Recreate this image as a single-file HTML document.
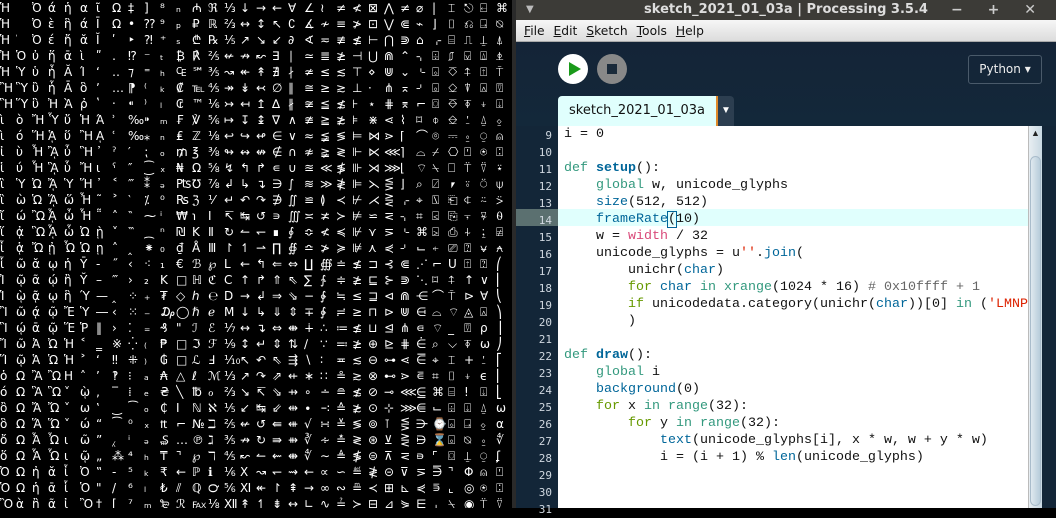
<!DOCTYPE html>
<html><head><meta charset="utf-8"><style>
*{margin:0;padding:0;box-sizing:border-box}
body{width:1056px;height:508px;overflow:hidden;background:#000;position:relative;font-family:"Liberation Sans",sans-serif}
#cv{position:absolute;left:0;top:0;width:512px;height:508px;background:#000;overflow:hidden;color:#fff;font:12px/16px "DejaVu Sans","Noto Sans CJK SC",sans-serif}
#cv div{height:16px;white-space:nowrap}
#cv span{display:inline-block;width:16px;text-align:left;overflow:hidden;height:16px}
#gap{position:absolute;left:512px;top:0;width:4px;height:508px;background:#2a2a2a}
#win{position:absolute;left:516px;top:0;width:540px;height:508px;background:#132638}
#title{height:20px;background:#3c3b37;color:#ddd;font:bold 13px/20px "DejaVu Sans",sans-serif;text-align:center;position:relative}
#menu{position:absolute;top:20px;left:0;width:540px;height:22px;background:linear-gradient(#f6f6f6,#dcdcdc);font:12.3px/22px "DejaVu Sans",sans-serif;color:#111;padding-left:8px;border-bottom:1px solid #aaa}
#menu span{margin-right:5px}
#tool{position:absolute;top:42px;left:0;width:540px;height:84px;background:linear-gradient(#142437,#13283a)}
.btn{position:absolute;top:12px;width:30px;height:30px;border-radius:50%}
#tab{position:absolute;left:42px;top:54px;width:160px;height:30px;background:#e0fffd;border-radius:4px 0 0 0;border-right:2px solid #e08a2a;font:13px/30px "DejaVu Sans",sans-serif;text-align:center;color:#111}
#tabdd{position:absolute;left:202px;top:54px;width:16px;height:30px;background:#2c3e50;border-radius:0 4px 0 0;color:#fff;font-size:10px;line-height:30px;text-align:center}
#py{position:absolute;left:452px;top:13px;width:74px;height:29px;border:1px solid #4a5a6a;border-radius:3px;color:#eee;font:12px/27px "DejaVu Sans",sans-serif;text-align:center}
#gut{position:absolute;left:0;top:126px;width:42px;height:382px;background:#132638}
#code{position:absolute;left:42px;top:126px;width:470px;height:382px;background:#fff}
#sb{position:absolute;left:512px;top:126px;width:14px;height:382px;background:linear-gradient(90deg,#e8eef2,#c8d8e2);border-left:1px solid #bbb}
#rs{position:absolute;left:526px;top:126px;width:14px;height:382px;background:#132638}
.ln{position:absolute;left:0;width:36px;text-align:right;font:11px/17px "DejaVu Sans Mono",monospace;color:#d0d8e0}
.cl{position:absolute;left:6px;font:13.33px/17px "Liberation Mono",monospace;color:#111;white-space:pre}
.k{color:#33997e}.b{color:#006699}.f{color:#006699;font-weight:bold}.p{color:#d94a7a}.g{color:#669900}.s{color:#dd2200}.c{color:#666}
</style></head><body>
<div id="cv">
<div><span>Ἡ</span><span>̓</span><span>Ὀ</span><span>ά</span><span>ἡ</span><span>α</span><span>ῖ</span><span>Ω</span><span>‡</span><span>]</span><span>⁸</span><span>ₙ</span><span>₼</span><span>ℜ</span><span>⅓</span><span>↓</span><span>→</span><span>←</span><span>∀</span><span>∠</span><span>≀</span><span>≠</span><span>≮</span><span>⊠</span><span>⋀</span><span>≠</span><span>⌀</span><span>|</span><span>⌶</span><span>⎋</span><span>⍇</span><span>⌘</span></div>
<div><span>Ἡ</span><span>̔</span><span>Ὀ</span><span>ὲ</span><span>ἣ</span><span>ά</span><span>Ῑ</span><span>Ω</span><span>•</span><span>⁇</span><span>⁹</span><span>ₚ</span><span>₽</span><span>ℝ</span><span>⅔</span><span>↔</span><span>↕</span><span>↖</span><span>∁</span><span>∡</span><span>≁</span><span>≡</span><span>≯</span><span>⊡</span><span>⋁</span><span>⋐</span><span>⌁</span><span>⌋</span><span>⌷</span><span>⎌</span><span>⍈</span><span>⍉</span></div>
<div><span>Ἡ</span><span>̕</span><span>Ὀ</span><span>έ</span><span>ἤ</span><span>ᾰ</span><span>Ῐ</span><span>ʹ</span><span>‣</span><span>⁈</span><span>⁺</span><span>ₛ</span><span>₾</span><span>℞</span><span>⅕</span><span>↗</span><span>↘</span><span>↙</span><span>∂</span><span>∢</span><span>≂</span><span>≢</span><span>≰</span><span>⊢</span><span>⋂</span><span>⋑</span><span>⌂</span><span>⌌</span><span>⌸</span><span>⎍</span><span>⍊</span><span>⍋</span></div>
<div><span>Ἠ</span><span>Ὁ</span><span>ὐ</span><span>ἥ</span><span>ᾱ</span><span>ὶ</span><span>ʺ</span><span>․</span><span>⁉</span><span>⁻</span><span>ₜ</span><span>₿</span><span>℟</span><span>⅖</span><span>↚</span><span>↛</span><span>↜</span><span>∃</span><span>∣</span><span>≃</span><span>≣</span><span>≱</span><span>⊣</span><span>⋃</span><span>⋒</span><span>⌃</span><span>⌍</span><span>⌹</span><span>⎎</span><span>⍌</span><span>⍍</span><span>⍎</span></div>
<div><span>Ἡ</span><span>Ὑ</span><span>ὑ</span><span>ἦ</span><span>Ᾰ</span><span>Ί</span><span>ʻ</span><span>‥</span><span>⁊</span><span>⁼</span><span>ₕ</span><span>₠</span><span>℠</span><span>⅗</span><span>↝</span><span>↞</span><span>↟</span><span>∄</span><span>∤</span><span>≄</span><span>≤</span><span>≲</span><span>⊤</span><span>⋄</span><span>⋓</span><span>⌄</span><span>⌎</span><span>⌺</span><span>⎏</span><span>⍏</span><span>⍐</span><span>⍑</span></div>
<div><span>Ἢ</span><span>Ὓ</span><span>ὒ</span><span>ἧ</span><span>Ᾱ</span><span>ὃ</span><span>ʼ</span><span>…</span><span>⁋</span><span>⁽</span><span>ₖ</span><span>₡</span><span>℡</span><span>⅘</span><span>↠</span><span>↡</span><span>↢</span><span>∅</span><span>∥</span><span>≅</span><span>≥</span><span>≳</span><span>⊥</span><span>⋅</span><span>⋔</span><span>⌅</span><span>⌏</span><span>⌻</span><span>⎐</span><span>⍒</span><span>⍓</span><span>⍔</span></div>
<div><span>Ἣ</span><span>Ὕ</span><span>ὓ</span><span>Ἠ</span><span>Ὰ</span><span>ῤ</span><span>ʽ</span><span>‧</span><span>⁌</span><span>⁾</span><span>ₗ</span><span>₢</span><span>™</span><span>⅙</span><span>↣</span><span>↤</span><span>↥</span><span>∆</span><span>∦</span><span>≆</span><span>≦</span><span>≴</span><span>⊦</span><span>⋆</span><span>⋕</span><span>⌆</span><span>⌐</span><span>⌼</span><span>⎑</span><span>⍕</span><span>⍖</span><span>⍗</span></div>
<div><span>ὶ</span><span>ὸ</span><span>Ἤ</span><span>Ὗ</span><span>ὔ</span><span>Ἡ</span><span>Ά</span><span>ʾ</span><span>‰</span><span>⁍</span><span>ₘ</span><span>₣</span><span>℣</span><span>⅚</span><span>↦</span><span>↧</span><span>↨</span><span>∇</span><span>∧</span><span>≇</span><span>≧</span><span>≵</span><span>⊧</span><span>⋇</span><span>⋖</span><span>⌇</span><span>⌑</span><span>⌽</span><span>⎒</span><span>⍘</span><span>⍙</span><span>⍚</span></div>
<div><span>ὶ</span><span>ό</span><span>Ἥ</span><span>ᾉ</span><span>ὕ</span><span>Ἢ</span><span>ᾼ</span><span>ʿ</span><span>‱</span><span>⁎</span><span>ₙ</span><span>₤</span><span>ℤ</span><span>⅛</span><span>↩</span><span>↪</span><span>↫</span><span>∈</span><span>∨</span><span>≈</span><span>≨</span><span>≶</span><span>⊨</span><span>⋈</span><span>⋗</span><span>⌈</span><span>⌒</span><span>⌾</span><span>⎓</span><span>⍛</span><span>⍜</span><span>⍝</span></div>
<div><span>ἰ</span><span>ὺ</span><span>Ἦ</span><span>ᾊ</span><span>ὖ</span><span>Ἣ</span><span>᾽</span><span>ˀ</span><span>′</span><span>⁏</span><span>ₒ</span><span>₥</span><span>℥</span><span>⅜</span><span>↬</span><span>↭</span><span>↮</span><span>∉</span><span>∩</span><span>≉</span><span>≩</span><span>≷</span><span>⊩</span><span>⋉</span><span>⋘</span><span>⌉</span><span>⌓</span><span>⌿</span><span>⎔</span><span>⍞</span><span>⍟</span><span>⍠</span></div>
<div><span>ἱ</span><span>ύ</span><span>Ἧ</span><span>ᾋ</span><span>ὗ</span><span>Ἤ</span><span>ι</span><span>ˁ</span><span>″</span><span>⁐</span><span>ₓ</span><span>₦</span><span>Ω</span><span>⅝</span><span>↯</span><span>↰</span><span>↱</span><span>∊</span><span>∪</span><span>≊</span><span>≪</span><span>≸</span><span>⊪</span><span>⋊</span><span>⋙</span><span>⌊</span><span>⌔</span><span>⍀</span><span>⎕</span><span>⍡</span><span>⍢</span><span>⍣</span></div>
<div><span>ἲ</span><span>Ὑ</span><span>Ὠ</span><span>ᾌ</span><span>Ὑ</span><span>Ἥ</span><span>᾿</span><span>˂</span><span>‴</span><span>⁑</span><span>ₔ</span><span>₧</span><span>℧</span><span>⅞</span><span>↲</span><span>↳</span><span>↴</span><span>∋</span><span>∫</span><span>≋</span><span>≫</span><span>≹</span><span>⊫</span><span>⋋</span><span>⋚</span><span>⌋</span><span>⌕</span><span>⍁</span><span>⎖</span><span>⍤</span><span>⍥</span><span>⍦</span></div>
<div><span>ἳ</span><span>ὼ</span><span>Ὡ</span><span>ᾍ</span><span>ὥ</span><span>Ἦ</span><span>῀</span><span>˃</span><span>‵</span><span>⁒</span><span>⁰</span><span>₨</span><span>ℨ</span><span>⅟</span><span>↵</span><span>↶</span><span>↷</span><span>∌</span><span>∬</span><span>≌</span><span>≬</span><span>≺</span><span>⊬</span><span>⋌</span><span>⋛</span><span>⌌</span><span>⌖</span><span>⍂</span><span>⎗</span><span>⍧</span><span>⍨</span><span>⍩</span></div>
<div><span>ἴ</span><span>ώ</span><span>Ὢ</span><span>ᾎ</span><span>ὦ</span><span>Ἧ</span><span>῁</span><span>˄</span><span>‶</span><span>⁓</span><span>ⁱ</span><span>₩</span><span>℩</span><span>Ⅰ</span><span>↸</span><span>↹</span><span>↺</span><span>∍</span><span>∭</span><span>≍</span><span>≭</span><span>≻</span><span>⊭</span><span>⋍</span><span>⋜</span><span>⌍</span><span>⌗</span><span>⍃</span><span>⎘</span><span>⍪</span><span>⍫</span><span>⍬</span></div>
<div><span>ἵ</span><span>ᾀ</span><span>Ὣ</span><span>ᾏ</span><span>ὧ</span><span>Ὠ</span><span>ῂ</span><span>˅</span><span>‷</span><span>⁔</span><span>ⁿ</span><span>₪</span><span>K</span><span>Ⅱ</span><span>↻</span><span>↼</span><span>↽</span><span>∎</span><span>∮</span><span>≎</span><span>≮</span><span>≼</span><span>⊮</span><span>⋎</span><span>⋝</span><span>⌎</span><span>⌘</span><span>⍄</span><span>⎙</span><span>⍭</span><span>⍮</span><span>⍯</span></div>
<div><span>ἶ</span><span>ᾁ</span><span>Ὤ</span><span>ᾐ</span><span>Ὦ</span><span>Ὡ</span><span>ῃ</span><span>˄</span><span>‸</span><span>⁕</span><span>₀</span><span>₫</span><span>Å</span><span>Ⅲ</span><span>↾</span><span>↿</span><span>⇀</span><span>∏</span><span>∯</span><span>≏</span><span>≯</span><span>≽</span><span>⊯</span><span>⋏</span><span>⋞</span><span>⌏</span><span>⌙</span><span>⍅</span><span>⎚</span><span>⍰</span><span>⍱</span><span>⍲</span></div>
<div><span>ἷ</span><span>ῶ</span><span>ᾰ</span><span>ῳ</span><span>ἡ</span><span>Ῡ</span><span>-</span><span>˝</span><span>‹</span><span>⁖</span><span>₁</span><span>€</span><span>ℬ</span><span>℘</span><span>L</span><span>←</span><span>↰</span><span>⇐</span><span>⇔</span><span>∐</span><span>∰</span><span>≐</span><span>≰</span><span>⊐</span><span>⊰</span><span>⋐</span><span>⋰</span><span>⌐</span><span>U</span><span>⍐</span><span>⍰</span><span>⎛</span></div>
<div><span>Ἰ</span><span>ῷ</span><span>ᾶ</span><span>ῴ</span><span>ἢ</span><span>Ῠ</span><span>–</span><span>‴</span><span>›</span><span>₂</span><span>K</span><span>□</span><span>ℍ</span><span>ℭ</span><span>C</span><span>↑</span><span>↱</span><span>⇑</span><span>⇖</span><span>∑</span><span>∱</span><span>≑</span><span>≱</span><span>⊑</span><span>⊱</span><span>⋑</span><span>⋱</span><span>⌑</span><span>⍏</span><span>↑</span><span>∨</span><span>⎜</span></div>
<div><span>Ἱ</span><span>ῲ</span><span>ᾷ</span><span>ῳ</span><span>ἣ</span><span>Ύ</span><span>—</span><span>‸</span><span>⁘</span><span>₊</span><span>₮</span><span>◇</span><span>ℎ</span><span>℮</span><span>D</span><span>→</span><span>↲</span><span>⇒</span><span>⇘</span><span>−</span><span>∲</span><span>≒</span><span>≤</span><span>⊒</span><span>⊲</span><span>⋒</span><span>⋲</span><span>⌒</span><span>⍑</span><span>⊳</span><span>∀</span><span>⎝</span></div>
<div><span>Ἲ</span><span>ῶ</span><span>ᾴ</span><span>ῷ</span><span>Ἔ</span><span>Ὑ</span><span>―</span><span>‹</span><span>⁙</span><span>₋</span><span>₯</span><span>◯</span><span>ℏ</span><span>ℯ</span><span>M</span><span>↓</span><span>↳</span><span>⇓</span><span>⇕</span><span>∓</span><span>∳</span><span>≓</span><span>≥</span><span>⊓</span><span>⊳</span><span>⋓</span><span>⋳</span><span>⌓</span><span>⌔</span><span>◬</span><span>⍓</span><span>⎞</span></div>
<div><span>Ἳ</span><span>ῴ</span><span>ᾱ</span><span>ῷ</span><span>Ἕ</span><span>Ῥ</span><span>‖</span><span>›</span><span>⁚</span><span>₌</span><span>₰</span><span>"</span><span>ℐ</span><span>ℰ</span><span>⅐</span><span>↔</span><span>↴</span><span>⇔</span><span>⇼</span><span>∔</span><span>∴</span><span>≔</span><span>≰</span><span>⊔</span><span>⊴</span><span>⋔</span><span>⋴</span><span>⌔</span><span>_</span><span>⍔</span><span>ρ</span><span>⎟</span></div>
<div><span>Ἴ</span><span>ῶ</span><span>Ἀ</span><span>Ὠ</span><span>Ἡ</span><span>˂</span><span>‗</span><span>※</span><span>⁛</span><span>₍</span><span>₱</span><span>□</span><span>ℑ</span><span>ℱ</span><span>⅑</span><span>↕</span><span>↵</span><span>⇕</span><span>⇅</span><span>∕</span><span>∵</span><span>≕</span><span>≱</span><span>⊕</span><span>⊵</span><span>⋕</span><span>⋵</span><span>⌕</span><span>⌵</span><span>⍕</span><span>ω</span><span>⎠</span></div>
<div><span>Ἵ</span><span>ῷ</span><span>Ἁ</span><span>Ὡ</span><span>Ἡ</span><span>˃</span><span>‘</span><span>‼</span><span>⁜</span><span>₎</span><span>₲</span><span>□</span><span>ℒ</span><span>Ⅎ</span><span>⅒</span><span>↖</span><span>↶</span><span>⇖</span><span>⇶</span><span>∖</span><span>∶</span><span>≖</span><span>≲</span><span>⊖</span><span>⊶</span><span>⋖</span><span>⋶</span><span>⌖</span><span>⌶</span><span>+</span><span>⍘</span><span>⎡</span></div>
<div><span>ὁ</span><span>Ω</span><span>Ἂ</span><span>Ὢ</span><span>H</span><span>˄</span><span>’</span><span>‽</span><span>⁝</span><span>ₐ</span><span>₳</span><span>△</span><span>ℓ</span><span>ℳ</span><span>⅓</span><span>↗</span><span>↷</span><span>⇗</span><span>⇷</span><span>∗</span><span>∷</span><span>≗</span><span>≳</span><span>⊗</span><span>⊷</span><span>⋗</span><span>⋷</span><span>⌗</span><span>⌷</span><span>⍖</span><span>ϵ</span><span>⎢</span></div>
<div><span>ό</span><span>Ω</span><span>Ἃ</span><span>Ὣ</span><span>˅</span><span>ῲ</span><span>‚</span><span>‾</span><span>⁞</span><span>ₑ</span><span>₴</span><span>╲</span><span>℔</span><span>ℴ</span><span>⅔</span><span>↘</span><span>↸</span><span>⇘</span><span>⇸</span><span>∘</span><span>∸</span><span>≘</span><span>≴</span><span>⊘</span><span>⊸</span><span>⋘</span><span>⋸</span><span>⌘</span><span>⌸</span><span>!</span><span>⍗</span><span>⎣</span></div>
<div><span>ὂ</span><span>Ω</span><span>Ἄ</span><span>Ὤ</span><span>˅</span><span>ω</span><span>‛</span><span>‿</span><span>⁀</span><span>ₒ</span><span>₵</span><span>I</span><span>ℕ</span><span>ℵ</span><span>⅕</span><span>↙</span><span>↹</span><span>⇙</span><span>⇹</span><span>∙</span><span>∹</span><span>≙</span><span>≵</span><span>⊙</span><span>⊹</span><span>⋙</span><span>⋹</span><span>⌙</span><span>⌹</span><span>⍗</span><span>⍙</span><span>ω</span></div>
<div><span>ὃ</span><span>Ω</span><span>Ἅ</span><span>Ὥ</span><span>˅</span><span>ώ</span><span>“</span><span>⁀</span><span>⁰</span><span>ₓ</span><span>₶</span><span>⌐</span><span>№</span><span>ℶ</span><span>⅖</span><span>↚</span><span>↺</span><span>⇚</span><span>⇺</span><span>√</span><span>∺</span><span>≚</span><span>≶</span><span>⊚</span><span>⊺</span><span>⋚</span><span>⋺</span><span>⌚</span><span>⌺</span><span>⍈</span><span>⍚</span><span>α</span></div>
<div><span>ὄ</span><span>Ω</span><span>Ἆ</span><span>Ὦ</span><span>ι</span><span>ῶ</span><span>”</span><span>⁁</span><span>ⁱ</span><span>ₔ</span><span>₷</span><span>…</span><span>℗</span><span>ℷ</span><span>⅗</span><span>↛</span><span>↻</span><span>⇛</span><span>⇻</span><span>∛</span><span>∻</span><span>≛</span><span>≷</span><span>⊛</span><span>⊻</span><span>⋛</span><span>⋻</span><span>⌛</span><span>⌻</span><span>⍉</span><span>⍛</span><span>∜</span></div>
<div><span>ὅ</span><span>Ω</span><span>Ἇ</span><span>Ὧ</span><span>ι</span><span>ῷ</span><span>„</span><span>⁂</span><span>⁴</span><span>ₕ</span><span>₸</span><span>⌝</span><span>℘</span><span>ℸ</span><span>⅘</span><span>↜</span><span>↼</span><span>⇜</span><span>⇼</span><span>∜</span><span>∼</span><span>≜</span><span>≸</span><span>⊜</span><span>⊼</span><span>⋜</span><span>⋼</span><span>⌜</span><span>⌼</span><span>⍊</span><span>⍜</span><span>ʆ</span></div>
<div><span>Ὀ</span><span>Ω</span><span>ἠ</span><span>ᾰ</span><span>ἶ</span><span>Ὀ</span><span>‟</span><span>-</span><span>⁵</span><span>ₖ</span><span>₹</span><span>←</span><span>ℙ</span><span>ℹ</span><span>⅙</span><span>X</span><span>↝</span><span>↽</span><span>⇝</span><span>←</span><span>∝</span><span>∽</span><span>≝</span><span>≹</span><span>⊝</span><span>⊽</span><span>⋝</span><span>⋽</span><span>⌝</span><span>Φ</span><span>⍝</span><span>⍞</span></div>
<div><span>Ὁ</span><span>Ω</span><span>ἡ</span><span>ᾱ</span><span>ἷ</span><span>Ὁ</span><span>"</span><span>/</span><span>⁶</span><span>ₗ</span><span>₺</span><span>⫽</span><span>ℚ</span><span>℺</span><span>⅚</span><span>Ⅺ</span><span>↞</span><span>↾</span><span>⇞</span><span>→</span><span>∞</span><span>∾</span><span>≞</span><span>≺</span><span>⊞</span><span>⊾</span><span>⋞</span><span>⋾</span><span>⌞</span><span>◎</span><span>⍟</span><span>⍠</span></div>
<div><span>Ὂ</span><span>ὰ</span><span>ἢ</span><span>ᾶ</span><span>ἰ</span><span>Ὂ</span><span>†</span><span>[</span><span>⁷</span><span>ₘ</span><span>₻</span><span>ℛ</span><span>℻</span><span>⅛</span><span>Ⅻ</span><span>↟</span><span>↿</span><span>⇟</span><span>↔</span><span>∟</span><span>∿</span><span>≟</span><span>≻</span><span>⊟</span><span>⊿</span><span>⋟</span><span>⋿</span><span>⌟</span><span>⍀</span><span>◉</span><span>⍡</span><span>⍢</span></div>
</div>
<div id="gap"></div>
<div id="win">
<div id="title"><span style="position:absolute;left:10px;top:0;font-size:10px;color:#bbb">▼</span>sketch_2021_01_03a | Processing 3.5.4<span style="position:absolute;right:10px;top:0;color:#ccc;font-size:14px;letter-spacing:10px">− + ✕</span></div>
<div id="menu"><span><u>F</u>ile</span> <span><u>E</u>dit</span> <span><u>S</u>ketch</span> <span><u>T</u>ools</span> <span><u>H</u>elp</span></div>
<div id="tool">
<div class="btn" style="left:42px;background:#fff"><div style="position:absolute;left:11px;top:8px;width:0;height:0;border-left:12px solid #1a9a1a;border-top:7px solid transparent;border-bottom:7px solid transparent"></div></div>
<div class="btn" style="left:81px;background:#888"><div style="position:absolute;left:10px;top:10px;width:10px;height:10px;background:#1a2a3a"></div></div>
<div id="py">Python ▾</div>
<div id="tab">sketch_2021_01_03a</div>
<div id="tabdd">▼</div>
</div>
<div id="gut">
<div style="position:absolute;left:0;top:83px;width:42px;height:17px;background:#5b7070"></div>
<div class="ln" style="top:1px">9</div><div class="ln" style="top:18px">10</div><div class="ln" style="top:35px">11</div><div class="ln" style="top:52px">12</div><div class="ln" style="top:69px">13</div><div class="ln" style="top:86px">14</div><div class="ln" style="top:103px">15</div><div class="ln" style="top:120px">16</div><div class="ln" style="top:137px">17</div><div class="ln" style="top:154px">18</div><div class="ln" style="top:171px">19</div><div class="ln" style="top:188px">20</div><div class="ln" style="top:205px">21</div><div class="ln" style="top:222px">22</div><div class="ln" style="top:239px">23</div><div class="ln" style="top:256px">24</div><div class="ln" style="top:273px">25</div><div class="ln" style="top:290px">26</div><div class="ln" style="top:307px">27</div><div class="ln" style="top:324px">28</div><div class="ln" style="top:341px">29</div><div class="ln" style="top:358px">30</div><div class="ln" style="top:375px">31</div>
</div>
<div id="code">
<div style="position:absolute;left:0;top:83px;width:470px;height:17px;background:#e0fffd"></div>
<div class="cl" style="top:0px">i = 0</div>
<div class="cl" style="top:34px"><span class="k">def</span> <span class="f">setup</span>():</div>
<div class="cl" style="top:51px">    <span class="k">global</span> w, unicode_glyphs</div>
<div class="cl" style="top:68px">    <span class="b">size</span>(512, 512)</div>
<div class="cl" style="top:85px">    <span class="b">frameRate</span><span style="outline:1px solid #006699">(</span>10)</div>
<div class="cl" style="top:102px">    w = <span class="p">width</span> / 32</div>
<div class="cl" style="top:119px">    unicode_glyphs = u<span class="s">''</span>.<span class="b">join</span>(</div>
<div class="cl" style="top:136px">        unichr(<span class="b">char</span>)</div>
<div class="cl" style="top:153px">        <span class="g">for</span> <span class="b">char</span> <span class="k">in</span> <span class="k">xrange</span>(1024 * 16) <span class="c"># 0x10ffff + 1</span></div>
<div class="cl" style="top:170px">        <span class="g">if</span> unicodedata.category(unichr(<span class="b">char</span>))[0] <span class="k">in</span> (<span class="s">'LMNP</span></div>
<div class="cl" style="top:187px">        )</div>
<div class="cl" style="top:221px"><span class="k">def</span> <span class="f">draw</span>():</div>
<div class="cl" style="top:238px">    <span class="k">global</span> i</div>
<div class="cl" style="top:255px">    <span class="b">background</span>(0)</div>
<div class="cl" style="top:272px">    <span class="g">for</span> x <span class="k">in</span> <span class="k">range</span>(32):</div>
<div class="cl" style="top:289px">        <span class="g">for</span> y <span class="k">in</span> <span class="k">range</span>(32):</div>
<div class="cl" style="top:306px">            <span class="b">text</span>(unicode_glyphs[i], x * w, w + y * w)</div>
<div class="cl" style="top:323px">            i = (i + 1) % <span class="b">len</span>(unicode_glyphs)</div>
</div>
<div id="sb"><div style="position:absolute;left:2px;top:2px;font-size:9px;color:#222">▲</div><div style="position:absolute;left:1px;top:30px;width:11px;height:350px;border-radius:6px;background:linear-gradient(90deg,#dfe9ef,#b7ccda);border:1px solid #a9bccb"></div></div>
<div id="rs"></div>
</div>
</body></html>
